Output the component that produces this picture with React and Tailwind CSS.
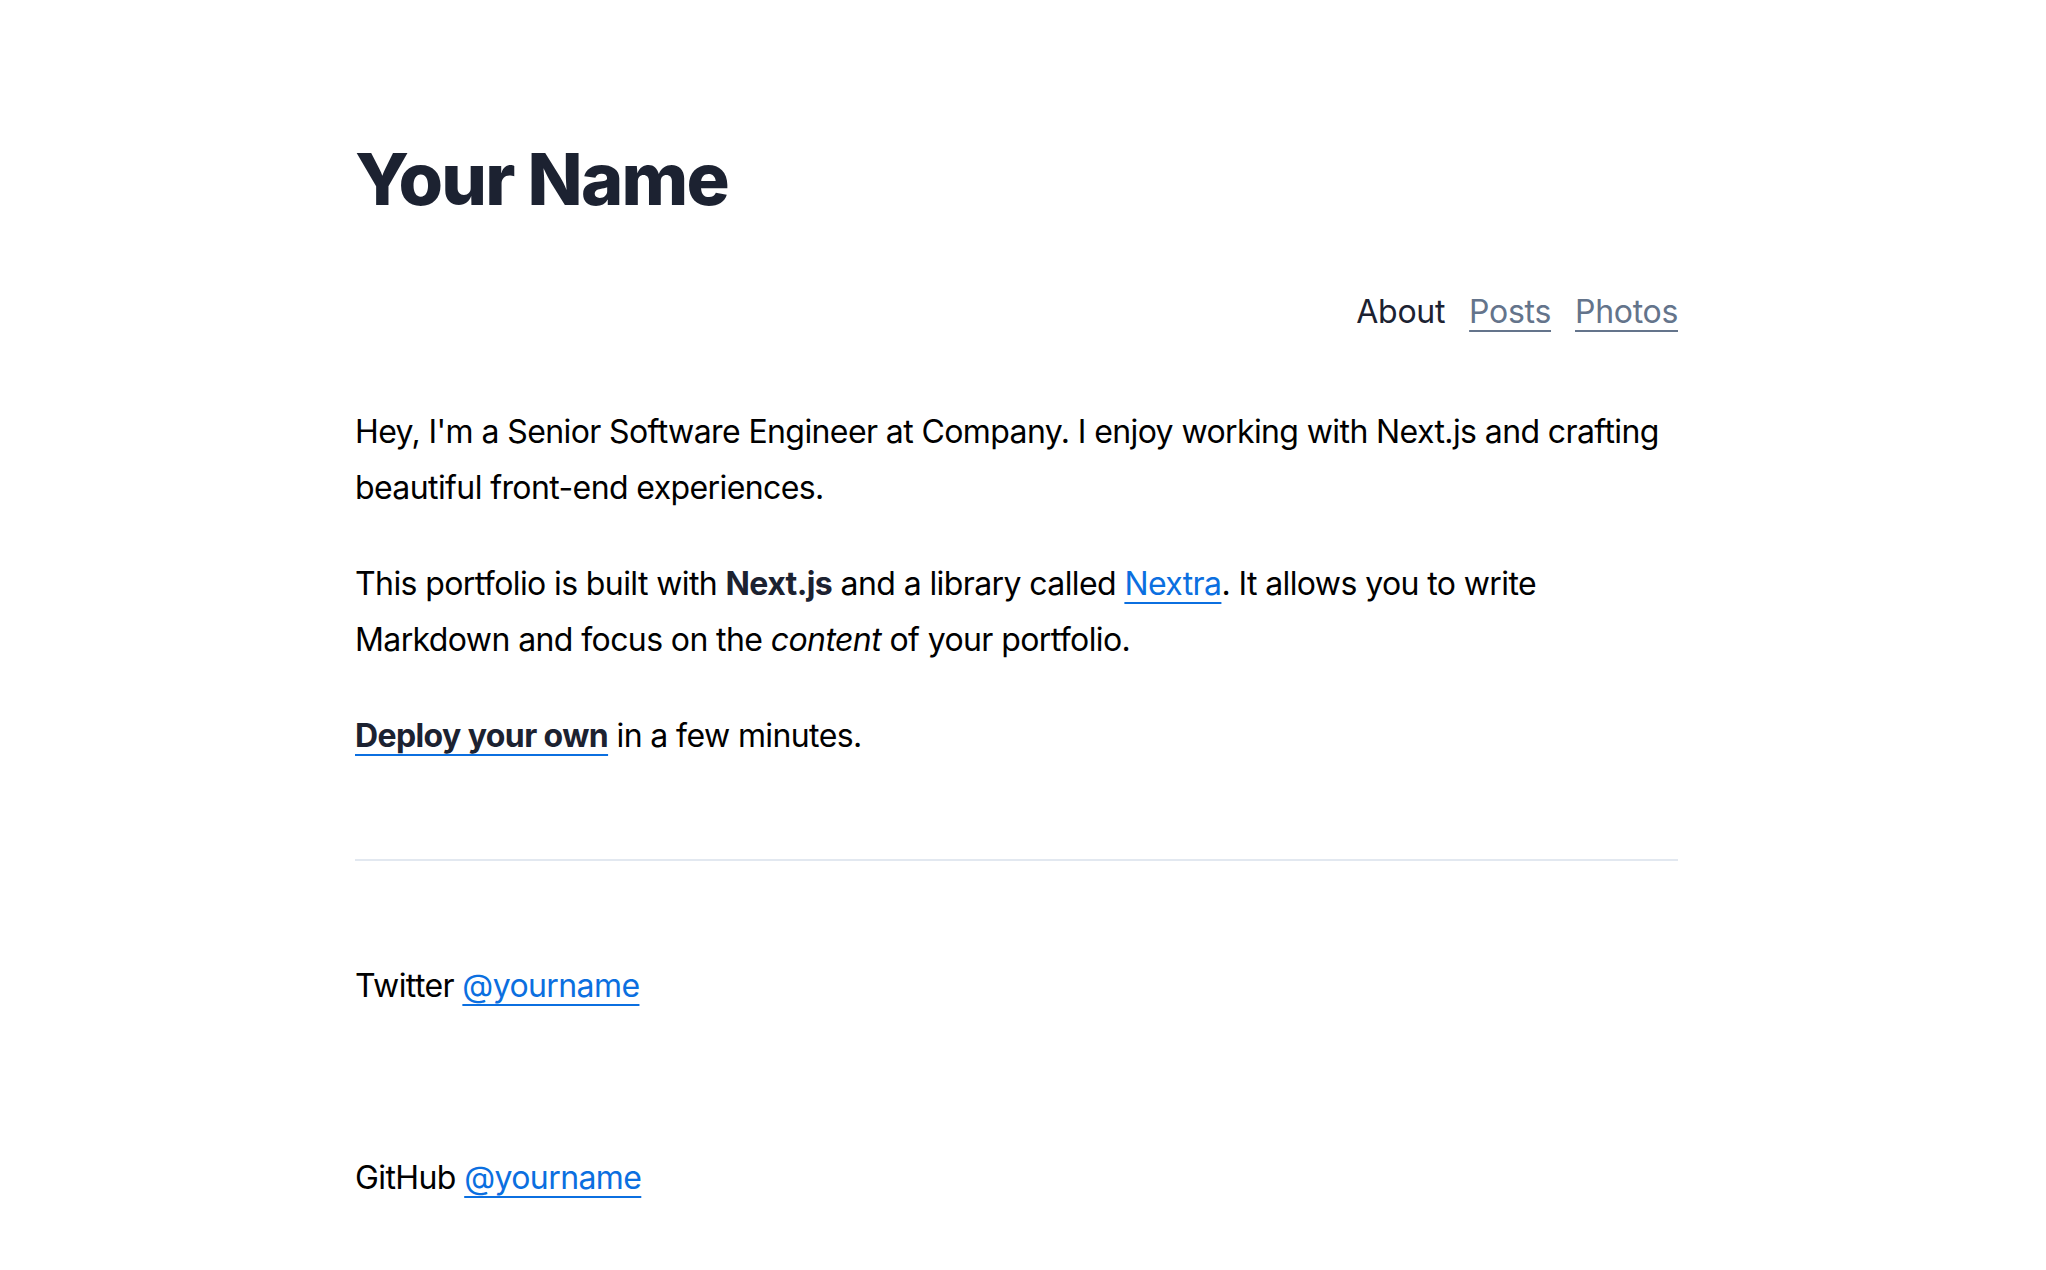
const linkClass =
  "text-[#0b6fe0] underline decoration-2 underline-offset-[7px] decoration-[#0b6fe0]";

const NavLink = ({ children, active }) =>
  active ? (
    <span className="text-[#1c2231]">{children}</span>
  ) : (
    <a
      href="#"
      className="text-[#64748b] underline decoration-2 underline-offset-[7px] decoration-[#64748b]"
    >
      {children}
    </a>
  );

export default function App() {
  return (
    <div
      className="min-h-screen bg-white text-black"
      style={{ fontFamily: "Inter, 'Noto Sans', sans-serif" }}
    >
      <div className="ml-[355px] w-[1323px] pt-[139px] pb-[60px]">
        {/* Header */}
        <h1 className="text-[72px] leading-[80px] font-extrabold tracking-[-1.8px] text-[#1c2231]">
          Your Name
        </h1>

        <nav className="mt-[65px] flex justify-end gap-6 text-[32px] leading-[56px] tracking-[-0.3px]">
          <NavLink active>About</NavLink>
          <NavLink>Posts</NavLink>
          <NavLink>Photos</NavLink>
        </nav>

        {/* Content */}
        <article className="mt-[64px] text-[32px] leading-[56px] tracking-[-0.6px]">
          <p>
            Hey, I'm a Senior Software Engineer at Company. I enjoy working with
            Next.js and crafting beautiful front-end experiences.
          </p>

          <p className="mt-[40px]">
            This portfolio is built with{" "}
            <strong className="font-bold text-[#1c2231]">Next.js</strong> and a
            library called{" "}
            <a href="#" className={linkClass}>
              Nextra
            </a>
            . It allows you to write Markdown and focus on the{" "}
            <em>content</em> of your portfolio.
          </p>

          <p className="mt-[40px]">
            <a
              href="#"
              className="font-bold text-[#1c2231] underline decoration-2 underline-offset-[7px] decoration-[#0b6fe0]"
            >
              Deploy your own
            </a>{" "}
            in a few minutes.
          </p>

          <hr className="mt-[95px] border-0 border-t-2 border-[#e2e8f0]" />

          <p className="mt-[97px]">
            Twitter{" "}
            <a href="#" className={linkClass}>
              @yourname
            </a>
          </p>

          <p className="mt-[136px]">
            GitHub{" "}
            <a href="#" className={linkClass}>
              @yourname
            </a>
          </p>
        </article>
      </div>
    </div>
  );
}
